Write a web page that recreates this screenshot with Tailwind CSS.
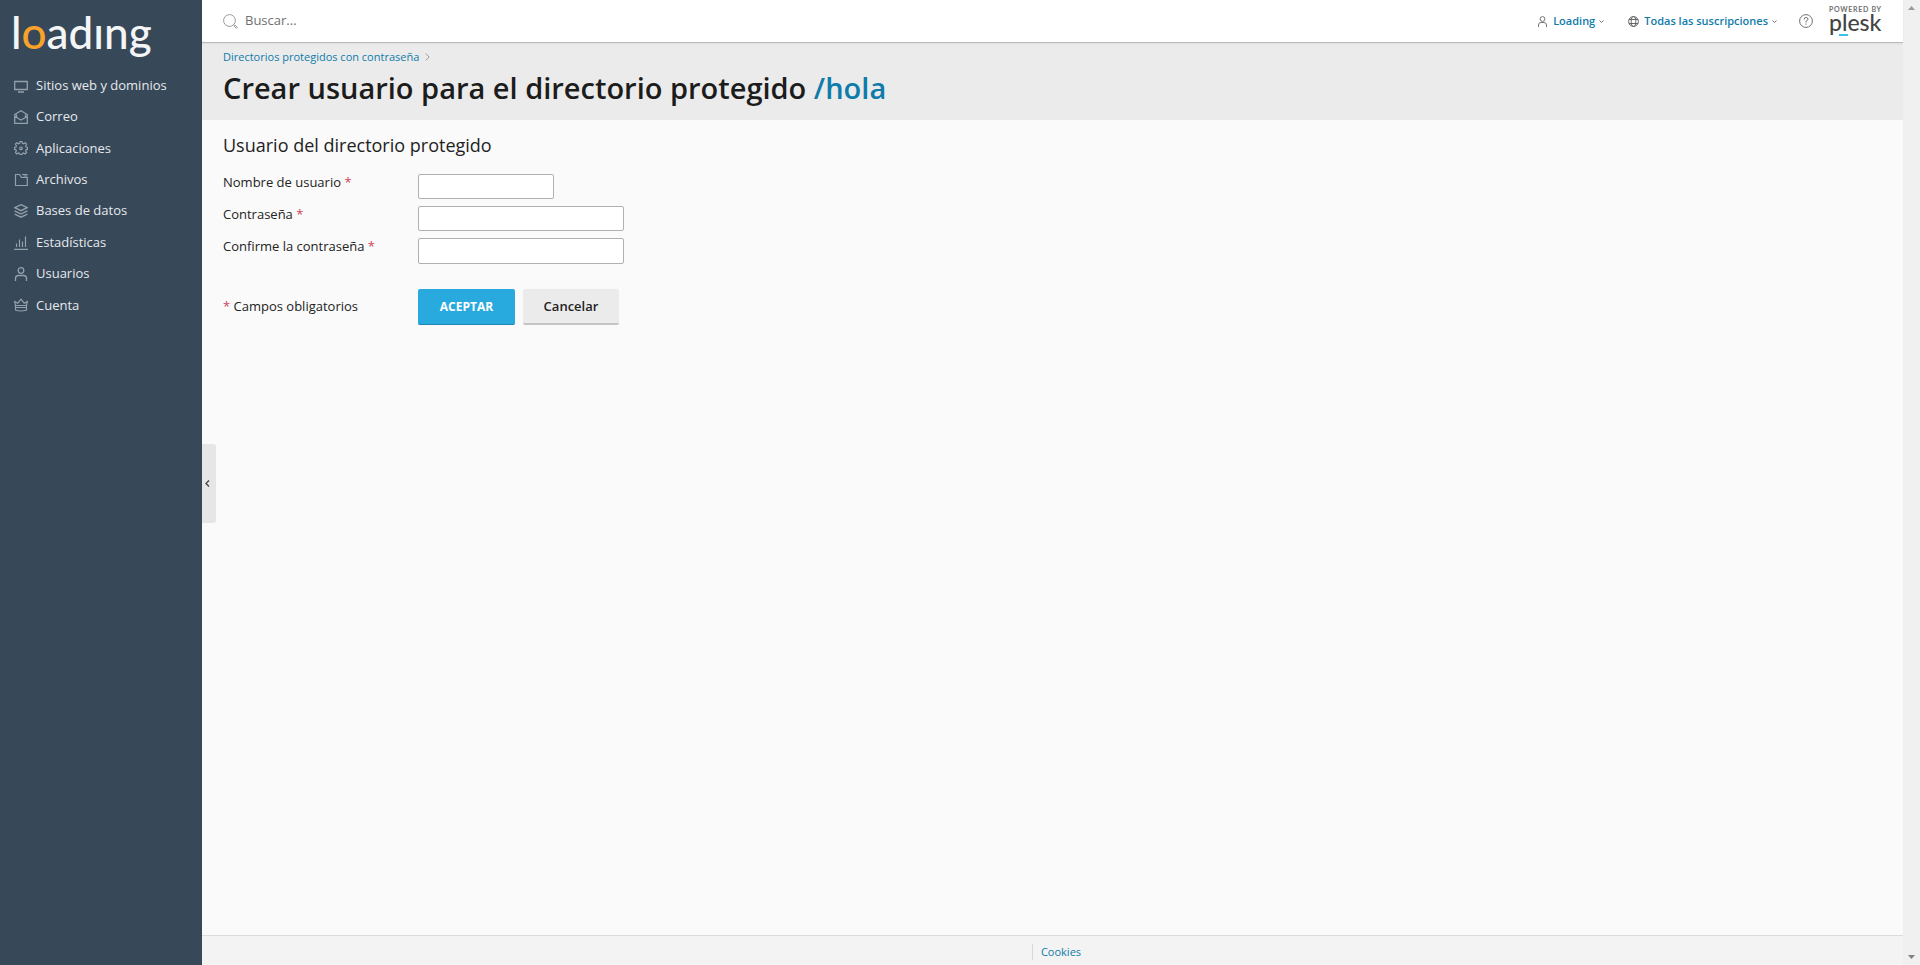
<!DOCTYPE html>
<html lang="es">
<head>
<meta charset="utf-8">
<title>Crear usuario para el directorio protegido</title>
<script src="https://cdn.jsdelivr.net/npm/@tailwindcss/browser@4"></script>
</head>
<body class="flex h-screen overflow-hidden bg-[#fafafa] font-['Open_Sans','Liberation_Sans',sans-serif] text-[13px] text-[#222222]">

<aside class="flex w-[202px] shrink-0 flex-col bg-[#374859]">
  <a href="#" aria-label="loading" class="flex h-[70px] items-center pb-[6px] pl-[11px] font-['Lato',sans-serif] text-[44px] leading-none font-medium text-[#f4f5f7]"><span>l<span class="text-[#f9a22b]">o</span>adıng</span></a>
  <nav class="flex h-[251px] flex-col justify-between text-[#e6e9ec]">
    <a href="#" class="flex h-[31px] items-center gap-2 pl-[14px]">
      <svg class="size-[14px] text-[#94a0aa]" viewBox="0 0 14 14" fill="none" stroke="currentColor" stroke-width="1.300"><path d="M.7 2.500h12.600v8H.7zM4 13h6"/></svg>Sitios web y dominios</a>
    <a href="#" class="flex h-[31px] items-center gap-2 pl-[14px]">
      <svg class="size-[14px] text-[#94a0aa]" viewBox="0 0 14 14" fill="none" stroke="currentColor" stroke-width="1.300"><path d="M.7 4.500 7 .8l6.300 3.700v8.800H.7zM.7 6.500 7 10l6.300-3.500M2.500 7V4.500M11.500 7V4.500"/></svg>Correo</a>
    <a href="#" class="flex h-[31px] items-center gap-2 pl-[14px]">
      <svg class="size-[14px] text-[#94a0aa]" viewBox="0 0 14 14" fill="none" stroke="currentColor" stroke-width="1.200"><path d="M6 .7h2l.4 1.600 1.200.5 1.600-1 1.400 1.400-1 1.600.5 1.200 1.300.4v2l-1.300.3-.5 1.200 1 1.600-1.400 1.400-1.600-1-1.200.5-.4 1.100H6l-.4-1.100-1.200-.5-1.600 1-1.400-1.400 1-1.600-.5-1.200L.6 8.400v-2L1.900 6l.5-1.200-1-1.600 1.400-1.400 1.600 1 1.200-.5z"/><circle cx="7" cy="7.300" r="1.300"/></svg>Aplicaciones</a>
    <a href="#" class="flex h-[31px] items-center gap-2 pl-[14px]">
      <svg class="size-[14px] text-[#94a0aa]" viewBox="0 0 14 14" fill="none" stroke="currentColor" stroke-width="1.200"><path d="M1.500 1.500h4l2 3h5.800v8H1.500zM8 1.500h5.500M9.500 3h4"/></svg>Archivos</a>
    <a href="#" class="flex h-[31px] items-center gap-2 pl-[14px]">
      <svg class="size-[14px] text-[#94a0aa]" viewBox="0 0 14 14" fill="none" stroke="currentColor" stroke-width="1.300"><path d="M7 .7 13.200 3.700 7 6.700.8 3.700zM.6 6.900 7 10l6.400-3.100M.6 10.100 7 13.200l6.400-3.100"/></svg>Bases de datos</a>
    <a href="#" class="flex h-[31px] items-center gap-2 pl-[14px]">
      <svg class="size-[14px] text-[#94a0aa]" viewBox="0 0 14 14" fill="none" stroke="currentColor" stroke-width="1.200"><path d="M0 13.400h14M2.500 11V7.500M5.500 11V3.500M8.500 11V5.500M11.500 11V.5"/></svg>Estadísticas</a>
    <a href="#" class="flex h-[31px] items-center gap-2 pl-[14px]">
      <svg class="size-[14px] text-[#94a0aa]" viewBox="0 0 14 14" fill="none" stroke="currentColor" stroke-width="1.300"><circle cx="7" cy="3.500" r="2.800"/><path d="M1.500 14v-2.500q0-3 3-3h5q3 0 3 3V14"/></svg>Usuarios</a>
    <a href="#" class="flex h-[31px] items-center gap-2 pl-[14px]">
      <svg class="size-[14px] text-[#94a0aa]" viewBox="0 0 14 14" fill="none" stroke="currentColor" stroke-width="1.200"><path d="M1.500 7.500.7 3.600l3.100 1.600L7 1.200l3.200 4 3.100-1.600-.8 3.900zM1.500 7.500v4.500q5.500 2 11 0V7.500M1.500 9.500h11"/></svg>Cuenta</a>
  </nav>
</aside>

<div class="relative flex min-w-0 flex-1 flex-col">
  <header class="z-10 flex h-[43px] shrink-0 items-center justify-between border-b border-[#b8b8b8] bg-white pr-5 pl-[21px] shadow-xs">
    <label class="flex items-center gap-[7px]">
      <svg class="size-[15px] text-[#999999]" viewBox="0 0 15 15" fill="none" stroke="currentColor"><circle cx="6.500" cy="6.500" r="5.900"/><path d="m10.500 10.500 1.500 1.300M11.300 12.300l1-1 2 2-1 1z"/></svg>
      <input type="search" aria-label="Buscar" placeholder="Buscar..." class="h-6 w-60 pb-[2px] outline-none placeholder:text-[#707070]">
    </label>
    <div class="flex items-center text-[11px] font-semibold text-[#0f7baa]">
      <button type="button" class="mr-6 flex items-center gap-1">
        <svg class="mr-px size-[11px] text-[#777777]" viewBox="0 0 11 11" fill="none" stroke="currentColor"><circle cx="5.500" cy="3" r="2.400"/><path d="M1.500 11V9q0-2.500 2.500-2.500h3Q9.500 6.500 9.500 9v2"/></svg>Loading
        <svg class="size-[5px] text-[#777777]" viewBox="0 0 5 5" fill="none" stroke="currentColor"><path d="m.5 1.500 2 2 2-2"/></svg>
      </button>
      <button type="button" class="mr-[22px] flex items-center gap-1">
        <svg class="mr-px size-[11px] text-[#666666]" viewBox="0 0 11 11" fill="none" stroke="currentColor"><circle cx="5.500" cy="5.500" r="4.900"/><ellipse cx="5.500" cy="5.500" rx="2.300" ry="4.900"/><path d="M1 3.500h9M1 7.500h9"/></svg>Todas las suscripciones
        <svg class="size-[5px] text-[#777777]" viewBox="0 0 5 5" fill="none" stroke="currentColor"><path d="m.5 1.500 2 2 2-2"/></svg>
      </button>
      <button type="button" aria-label="Ayuda" class="mr-4">
        <svg class="size-[14px] text-[#707070]" viewBox="0 0 14 14" fill="none" stroke="currentColor"><circle cx="7" cy="7" r="6.400"/><path d="M5 5.500q0-2 2-2t2 1.700Q9 6.300 7 7.300v1.200M7 9.500v1.200"/></svg>
      </button>
      <a href="#" class="flex w-[54px] flex-col pb-[5px] font-['Lato',sans-serif] text-[#444444]">
        <span class="text-[7px] leading-[8px] font-bold tracking-widest whitespace-nowrap text-[#707070]">POWERED BY</span>
        <span class="relative text-[23px] leading-[19px] font-medium">plesk<span class="absolute bottom-[-4px] left-[10px] h-[2px] w-[9px] bg-[#35c3e8]"></span></span>
      </a>
    </div>
  </header>

  <div class="h-[77px] shrink-0 bg-[#ebebeb] px-[21px] pt-[6px]">
    <nav aria-label="Ruta" class="flex h-4 items-center gap-[6px] text-[11px] text-[#0f7baa]">
      <a href="#">Directorios protegidos con contraseña</a>
      <svg class="h-2 w-[5px] text-[#999999]" viewBox="0 0 5 8" fill="none" stroke="currentColor"><path d="m.7.500 3.500 3.500L.7 7.500"/></svg>
    </nav>
    <h1 class="mt-[5px] text-[29px] leading-9 font-semibold text-[#1c1c1c]">Crear usuario para el directorio protegido <span class="text-[#0f7baa]">/hola</span></h1>
  </div>

  <main class="flex-1 px-[21px] pt-3">
    <h2 class="text-[18px] leading-[26px]">Usuario del directorio protegido</h2>
    <form class="mt-4">
      <div class="flex h-8 items-start">
        <label for="user" class="w-[195px] leading-4">Nombre de usuario <span class="text-[#d0435a]">*</span></label>
        <input id="user" type="text" class="h-[25px] w-[136px] rounded-[2px] border border-[#b0b0b0] bg-white px-2">
      </div>
      <div class="flex h-8 items-start">
        <label for="pass" class="w-[195px] leading-4">Contraseña <span class="text-[#d0435a]">*</span></label>
        <input id="pass" type="password" class="h-[25px] w-[206px] rounded-[2px] border border-[#b0b0b0] bg-white px-2">
      </div>
      <div class="flex h-8 items-start">
        <label for="confirm" class="w-[195px] leading-4">Confirme la contraseña <span class="text-[#d0435a]">*</span></label>
        <input id="confirm" type="password" class="h-[26px] w-[206px] rounded-[2px] border border-[#b0b0b0] bg-white px-2">
      </div>
      <div class="mt-[19px] flex items-center">
        <p class="w-[195px]"><span class="text-[#d0435a]">*</span> Campos obligatorios</p>
        <button type="submit" class="mr-2 h-9 w-[97px] rounded-[2px] border-b border-[#1f86b4] bg-[#28aade] text-xs font-bold text-white">ACEPTAR</button>
        <button type="button" class="h-9 w-24 rounded-[2px] border-b-2 border-[#c4c4c4] bg-[#ebebeb] pt-px font-semibold">Cancelar</button>
      </div>
    </form>
  </main>

  <footer class="flex h-[30px] shrink-0 items-center justify-center border-t border-[#dcdcdc] bg-[#f3f3f3] pt-[3px] pl-2 text-[11px] text-[#0f7baa]">
    <a href="#" class="border-l border-[#d8d8d8] pl-2">Cookies</a>
  </footer>

  <button type="button" aria-label="Contraer barra lateral" class="absolute top-[444px] left-0 flex h-[79px] w-[14px] items-center rounded-r-[3px] bg-[#e6e6e6] pl-[3px]">
    <svg class="h-[7px] w-[5px] text-[#444444]" viewBox="0 0 5 7" fill="none" stroke="currentColor" stroke-width="1.300"><path d="M4 .5 1 3.500l3 3"/></svg>
  </button>
</div>

<div class="flex w-[17px] shrink-0 flex-col items-center justify-between bg-[#f0f0f0] py-[6px]" aria-hidden="true">
  <svg class="h-1 w-[7px] text-[#9a9a9a]" viewBox="0 0 7 4" fill="currentColor"><path d="M0 4 3.500 0 7 4z"/></svg>
  <svg class="h-1 w-[7px] text-[#808080]" viewBox="0 0 7 4" fill="currentColor"><path d="m0 0 3.500 4L7 0z"/></svg>
</div>
</body>
</html>
